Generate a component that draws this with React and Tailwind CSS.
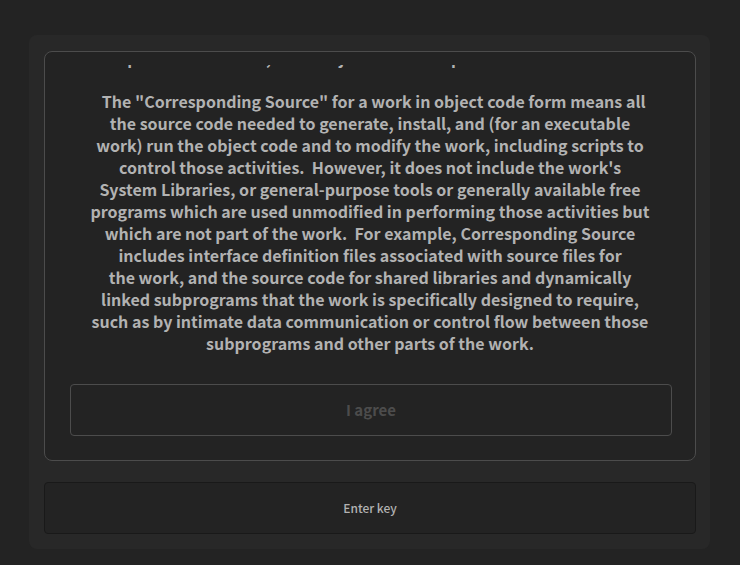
const LICENSE = `work runs, or a compiler used to
produce the work, or an object code interpreter used to run it.

  The "Corresponding Source" for a work in object code form means all
the source code needed to generate, install, and (for an executable
work) run the object code and to modify the work, including scripts to
control those activities.  However, it does not include the work's
System Libraries, or general-purpose tools or generally available free
programs which are used unmodified in performing those activities but
which are not part of the work.  For example, Corresponding Source
includes interface definition files associated with source files for
the work, and the source code for shared libraries and dynamically
linked subprograms that the work is specifically designed to require,
such as by intimate data communication or control flow between those
subprograms and other parts of the work.`;

export default function App() {
  return (
    <div className="min-h-screen bg-[#232323] pt-[35px] pr-[30px] pb-4 pl-[29px] font-['Noto_Sans_CJK_SC',sans-serif] text-[#b2b2b2]">
      <main className="rounded-lg bg-[#282828] pt-4 pr-[14px] pb-[15px] pl-[15px]">
        <section className="rounded-lg border border-[#4c4c4c] bg-[#232323] pt-[13px] pr-[23px] pb-6 pl-[25px]">
          <div className="flex h-[289px] flex-col justify-end overflow-hidden pr-0.5">
            <p className="text-center text-base leading-[22px] font-bold whitespace-pre-wrap">{LICENSE}</p>
          </div>
          <button
            type="button"
            disabled
            className="mt-[30px] block h-[52px] w-full rounded border border-[#4c4c4c] text-[15px] font-bold text-[#4c4c4c]"
          >
            I agree
          </button>
        </section>
        <button
          type="button"
          className="mt-[21px] block h-[52px] w-full rounded border border-[#191919] bg-[#232323] text-xs font-medium"
        >
          Enter key
        </button>
      </main>
    </div>
  );
}
